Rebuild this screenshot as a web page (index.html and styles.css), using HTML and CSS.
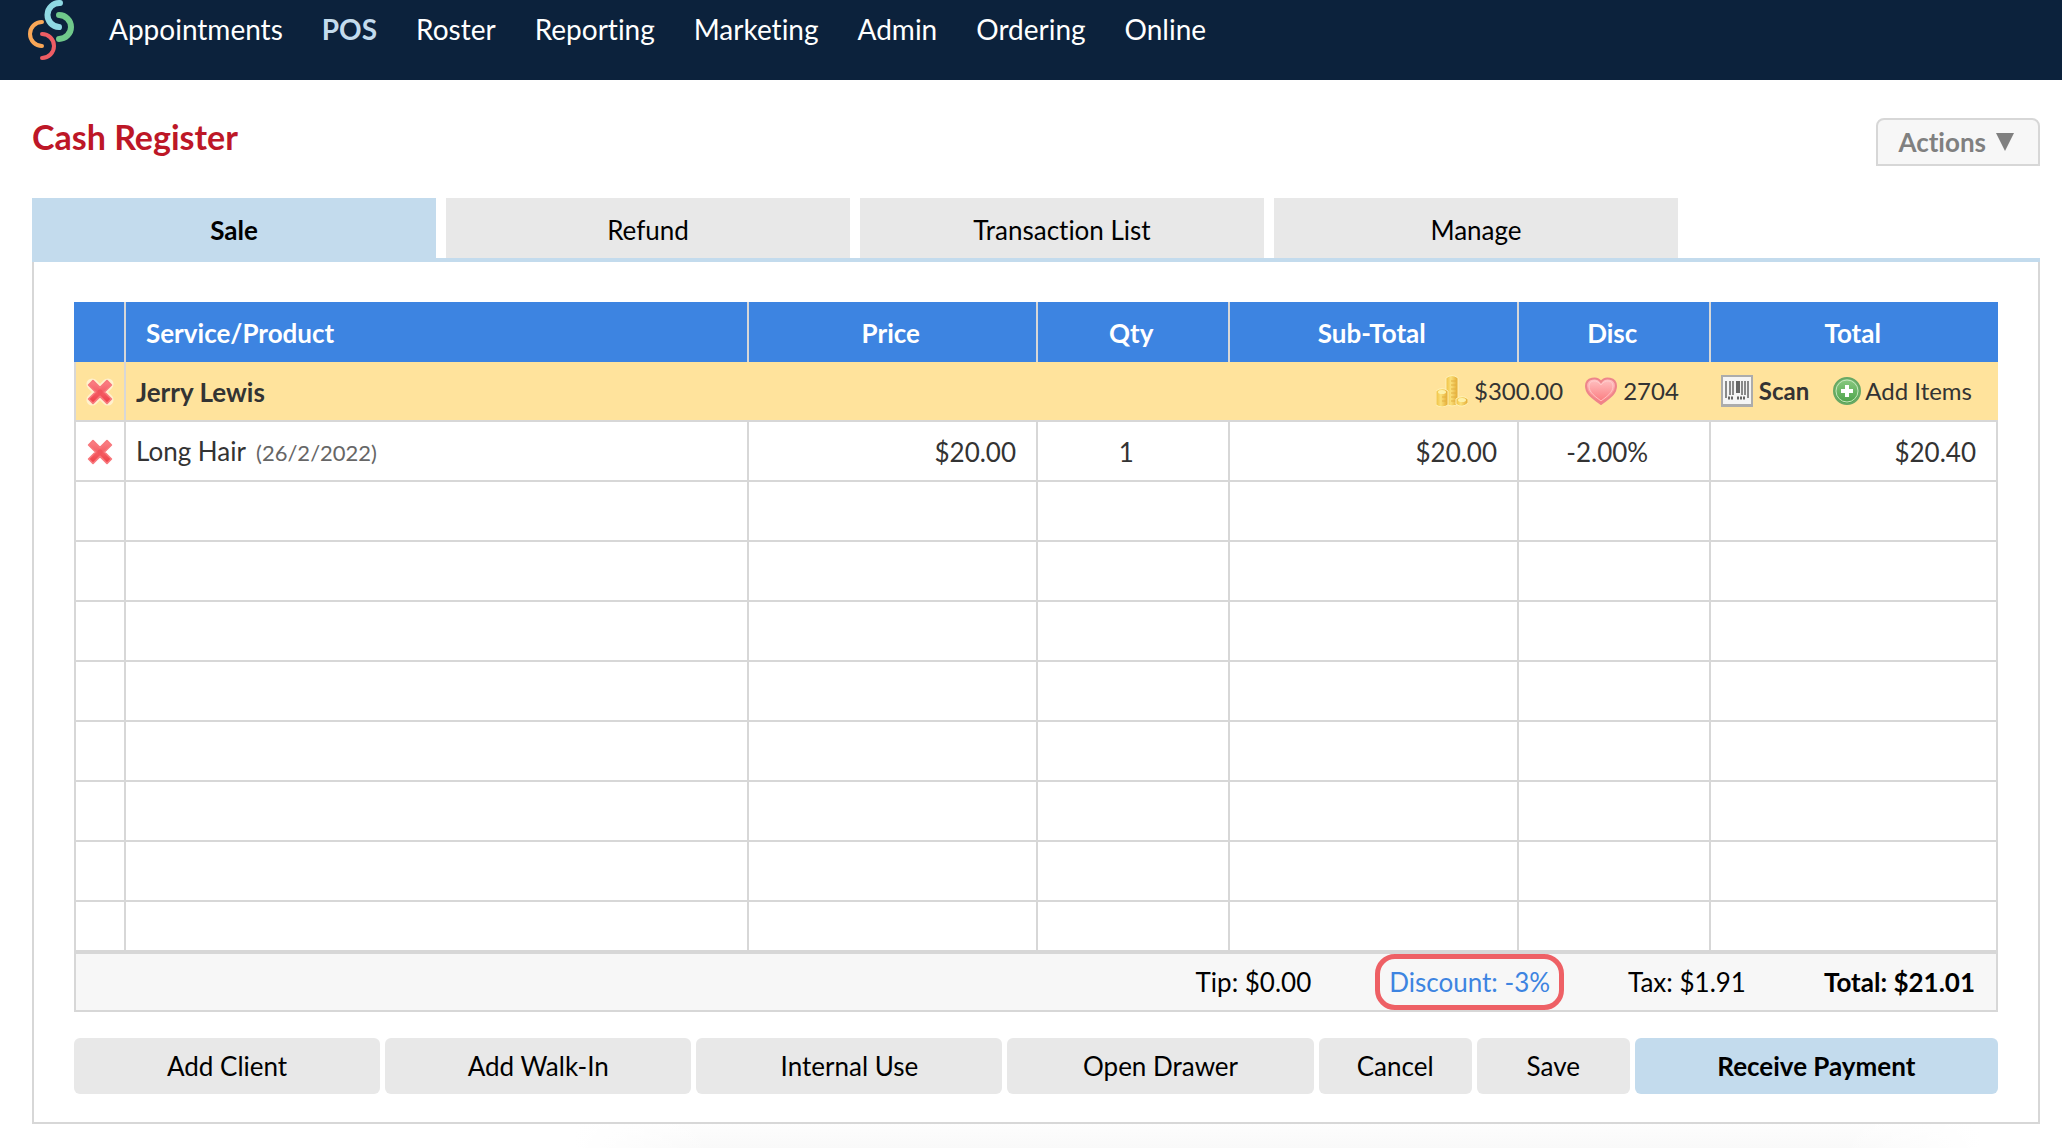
FILE: index.html
```html
<!DOCTYPE html>
<html lang="en">
<head>
<meta charset="utf-8">
<title>Cash Register</title>
<link rel="stylesheet" href="styles.css">
</head>
<body>
<svg class="defs" width="0" height="0" aria-hidden="true">
  <defs>
    <linearGradient id="red" x1="0" y1="0" x2="0" y2="1"><stop offset="0" stop-color="#fb8388"/><stop offset="1" stop-color="#ee3c44"/></linearGradient>
    <linearGradient id="pink" x1="0" y1="0" x2="0" y2="1"><stop offset="0" stop-color="#ffc4c4"/><stop offset="1" stop-color="#fb7479"/></linearGradient>
    <linearGradient id="gold" x1="0" y1="0" x2="1" y2="0"><stop offset="0" stop-color="#f0bf40"/><stop offset=".4" stop-color="#fbe07a"/><stop offset="1" stop-color="#e3a830"/></linearGradient>
    <linearGradient id="green" x1="0" y1="0" x2="0" y2="1"><stop offset="0" stop-color="#8ccb83"/><stop offset="1" stop-color="#4ba148"/></linearGradient>
    <symbol id="cross" viewBox="0 0 32 32">
      <path d="M7 7 25 25M25 7 7 25" stroke="#fff" stroke-opacity=".5" stroke-width="13" stroke-linecap="round"/>
      <path d="M8 3 16 11 24 3 29 8 21 16 29 24 24 29 16 21 8 29 3 24 11 16 3 8Z" fill="url(#red)" stroke="#f8777c" stroke-width="2" stroke-linejoin="round"/>
      <circle cx="16" cy="16" r="3" fill="#f2545c"/>
    </symbol>
  </defs>
</svg>
<header class="topbar">
  <a class="logo" href="#" aria-label="Home">
    <svg width="48" height="62" viewBox="0 0 48 62" fill="none" stroke-linecap="round">
      <path d="M32 3A12 12 0 0 0 31 27" stroke="#8fd9e3" stroke-width="6"/>
      <path d="M31 15A12 12 0 0 1 31 39" stroke="#70c98b" stroke-width="6"/>
      <path d="M14 22A12 12 0 0 0 14 46" stroke="#f9a757" stroke-width="4"/>
      <path d="M14 34A12 12 0 0 1 14 58" stroke="#ee5d64" stroke-width="4"/>
    </svg>
  </a>
  <nav class="nav">
    <a href="#">Appointments</a>
    <a href="#" class="current">POS</a>
    <a href="#">Roster</a>
    <a href="#">Reporting</a>
    <a href="#">Marketing</a>
    <a href="#">Admin</a>
    <a href="#">Ordering</a>
    <a href="#">Online</a>
  </nav>
</header>
<main class="page">
  <div class="heading">
    <h1>Cash Register</h1>
    <button class="actions" type="button">Actions
      <svg width="18" height="18" viewBox="0 0 18 18"><path d="M0 0H18L9 18Z" fill="#808080"/></svg>
    </button>
  </div>
  <div class="tabs">
    <button class="tab active" type="button">Sale</button>
    <button class="tab" type="button">Refund</button>
    <button class="tab" type="button">Transaction List</button>
    <button class="tab" type="button">Manage</button>
  </div>
  <section class="panel">
    <table class="register">
      <colgroup><col class="c-del"><col><col class="c-money"><col class="c-small"><col class="c-money"><col class="c-small"><col class="c-money"></colgroup>
      <thead>
        <tr><th></th><th class="name">Service/Product</th><th>Price</th><th>Qty</th><th>Sub-Total</th><th>Disc</th><th>Total</th></tr>
      </thead>
      <tbody>
        <tr class="client">
          <td class="del"><button type="button" aria-label="Remove client"><svg width="28" height="28"><use href="#cross"/></svg></button></td>
          <td colspan="6">
            <div class="client-line">
              <strong class="client-name">Jerry Lewis</strong>
              <span class="stat">
                <svg width="32" height="32" viewBox="0 0 32 32" stroke="#fff0b4" stroke-width="1">
                  <path d="M10 3Q16-2 22 3V29Q16 33 10 29Z" fill="url(#gold)"/>
                  <path d="M15 6H20M15 10H20M15 14H20M15 18H20M15 22H20M15 26H20" stroke="#e2b040"/>
                  <path d="M0 16Q6 11 12 16V30Q6 34 0 30Z" fill="url(#gold)"/>
                  <ellipse cx="6" cy="17" rx="4" ry="2" fill="#fdf0a8" stroke="none"/>
                  <path d="M6 22H10M6 26H10" stroke="#e2b040"/>
                  <path d="M20 24Q26 19 32 24V28Q26 34 20 29Z" fill="url(#gold)"/>
                  <ellipse cx="26" cy="25" rx="4" ry="2" fill="#fdf0a8" stroke="none"/>
                </svg>$300.00</span>
              <span class="stat">
                <svg width="32" height="28" viewBox="0 0 32 28"><path d="M16 27C10 22 1 18 1 9C1 1 12-1 16 5C20-1 31 1 31 9C31 18 22 22 16 27Z" fill="url(#pink)" stroke="#ee858b" stroke-width="2"/><path d="M16 24C11 20 4 16 4 9C4 3 12 2 16 8C20 2 28 3 28 9C28 16 21 20 16 24Z" fill="none" stroke="#ffd0d0" stroke-opacity=".8"/></svg>2704</span>
              <a class="stat scan" href="#">
                <svg width="32" height="32" viewBox="0 0 32 32"><path d="M0 0H32V32H0Z" fill="#acacac"/><path d="M2 2H30V29H2Z" fill="#f5f5f5"/><path d="M5 6V23M9 6V20M12 6V20M21 6V20M24 6V20M27 6V23" stroke="#666" stroke-width="1.5"/><path d="M17 6V18" stroke="#666" stroke-width="4"/><path d="M7 23H13M16 23H25" stroke="#666" stroke-width="3" stroke-dasharray="2 1"/></svg>Scan</a>
              <a class="stat add" href="#">
                <svg width="28" height="28" viewBox="0 0 28 28"><circle cx="14" cy="14" r="13" fill="url(#green)" stroke="#68a865" stroke-width="2"/><circle cx="14" cy="14" r="11" fill="none" stroke="#c5e6bd" stroke-width="1"/><path d="M14 8V20M8 14H20" stroke="#fff" stroke-width="4"/></svg>Add Items</a>
            </div>
          </td>
        </tr>
        <tr>
          <td class="del"><button type="button" aria-label="Remove Long Hair"><svg width="28" height="28"><use href="#cross"/></svg></button></td>
          <td class="item">Long Hair <span class="date">(26/2/2022)</span></td>
          <td class="money">$20.00</td><td class="count">1</td><td class="money">$20.00</td><td class="count">-2.00%</td><td class="money">$20.40</td>
        </tr>
        <tr><td></td><td></td><td></td><td></td><td></td><td></td><td></td></tr>
        <tr><td></td><td></td><td></td><td></td><td></td><td></td><td></td></tr>
        <tr><td></td><td></td><td></td><td></td><td></td><td></td><td></td></tr>
        <tr><td></td><td></td><td></td><td></td><td></td><td></td><td></td></tr>
        <tr><td></td><td></td><td></td><td></td><td></td><td></td><td></td></tr>
        <tr><td></td><td></td><td></td><td></td><td></td><td></td><td></td></tr>
        <tr><td></td><td></td><td></td><td></td><td></td><td></td><td></td></tr>
        <tr class="last"><td></td><td></td><td></td><td></td><td></td><td></td><td></td></tr>
      </tbody>
    </table>
    <div class="summary">
      <span>Tip: $0.00</span>
      <a class="discount" href="#">Discount: -3%</a>
      <span>Tax: $1.91</span>
      <strong>Total: $21.01</strong>
    </div>
    <div class="buttons">
      <button type="button">Add Client</button>
      <button type="button">Add Walk-In</button>
      <button type="button">Internal Use</button>
      <button type="button">Open Drawer</button>
      <button type="button" class="half">Cancel</button>
      <button type="button" class="half">Save</button>
      <button type="button" class="primary">Receive Payment</button>
    </div>
  </section>
  <div class="shade"></div>
</main>
</body>
</html>
```
FILE: styles.css
```css
* { box-sizing: border-box; }
body {
  margin: 0;
  background: #fff;
  color: #000;
  font: 26px/32px Lato, "Liberation Sans", sans-serif;
  font-variant-ligatures: none;
}
button { font: inherit; font-variant-ligatures: none; color: inherit; border: 0; padding: 0; cursor: pointer; }
a { color: inherit; text-decoration: none; }
svg { display: block; flex: none; }
.defs { position: absolute; }

.topbar { display: flex; height: 80px; padding-left: 28px; background: #0c223c; }
.logo { width: 81px; }
.nav { display: flex; gap: 39px; padding-top: 11px; color: #fff; font-size: 28px; line-height: 36px; }
.nav .current { color: #c3dbed; font-weight: 700; }

.page { padding: 37px 22px 0 32px; }
.heading { display: flex; justify-content: space-between; height: 81px; }
h1 { margin: 0; color: #bd1727; font-size: 34px; line-height: 40px; }
.actions {
  display: flex; align-items: center; gap: 10px;
  height: 48px; margin-top: 1px; padding: 0 24px 0 20px;
  border: 2px solid #d7d7d7; border-radius: 8px 8px 0 0;
  background: #f7f7f7; color: #808080; font-weight: 700;
}

.tabs { display: grid; grid-template-columns: repeat(4, 404fr) 352fr; gap: 10px; border-bottom: 4px solid #c3dbed; }
.tab { height: 60px; padding-top: 4px; background: #e8e8e8; }
.tab.active { background: #c3dbed; font-weight: 700; }
.panel { padding: 40px 40px 28px; border: 2px solid #d7d7d7; border-top: 0; }

.register { width: 100%; table-layout: fixed; border-collapse: separate; border-spacing: 0; color: #333; }
.c-del { width: 50px; }
.c-money { width: 15%; }
.c-small { width: 10%; }
th { height: 60px; padding: 2px 4px 0 0; background: #3d84e1; color: #fff; border-left: 2px solid #d7d7d7; }
th:first-child { border-left: 0; }
th.name { padding-left: 20px; text-align: left; }
td { height: 60px; padding: 2px 0 0; border-left: 2px solid #d7d7d7; border-bottom: 2px solid #d7d7d7; }
td:last-child { border-right: 2px solid #d7d7d7; }
.client td { background: #ffe39c; }
.client td:last-child { padding: 0; border-right: 0; }
.last td { height: 52px; border-bottom-width: 4px; }
.del button { display: block; margin: 0 auto; background: none; }
.client-line { display: flex; align-items: center; padding: 0 26px 0 10px; }
.client-name { margin-right: auto; padding-top: 2px; }
.stat { display: flex; align-items: center; gap: 6px; margin-left: 22px; font-size: 24px; }
.scan { margin-left: 42px; font-weight: 700; }
.add { gap: 4px; margin-left: 24px; }
.item { padding-left: 10px; }
.date { margin-left: 4px; color: #666; font-size: 22px; }
.money { padding-right: 20px; text-align: right; }
.count { padding-right: 14px; text-align: center; }

.summary {
  display: flex; align-items: center; justify-content: flex-end; gap: 78px;
  height: 58px; padding-right: 21px;
  border: 2px solid #d7d7d7; border-top: 0; background: #f7f7f7;
}
.discount { position: relative; color: #3d84e1; }
.discount::after {
  content: ""; position: absolute; inset: -12px -14px;
  border: 5px solid #ee6065; border-radius: 20px;
}

.buttons { display: flex; gap: 5px; margin-top: 26px; }
.buttons button { flex: 306 1 0; height: 56px; border-radius: 6px; background: #e8e8e8; }
.buttons .half { flex-grow: 153; }
.buttons .primary { flex-grow: 363; background: #c3dbed; font-weight: 700; }

.shade {
  height: 24px; margin-left: 27%; margin-right: 3%;
  background:
    linear-gradient(to right, #fff, transparent 10%, transparent 90%, #fff),
    linear-gradient(#fdfdfd, #f9f9f9);
}
```
